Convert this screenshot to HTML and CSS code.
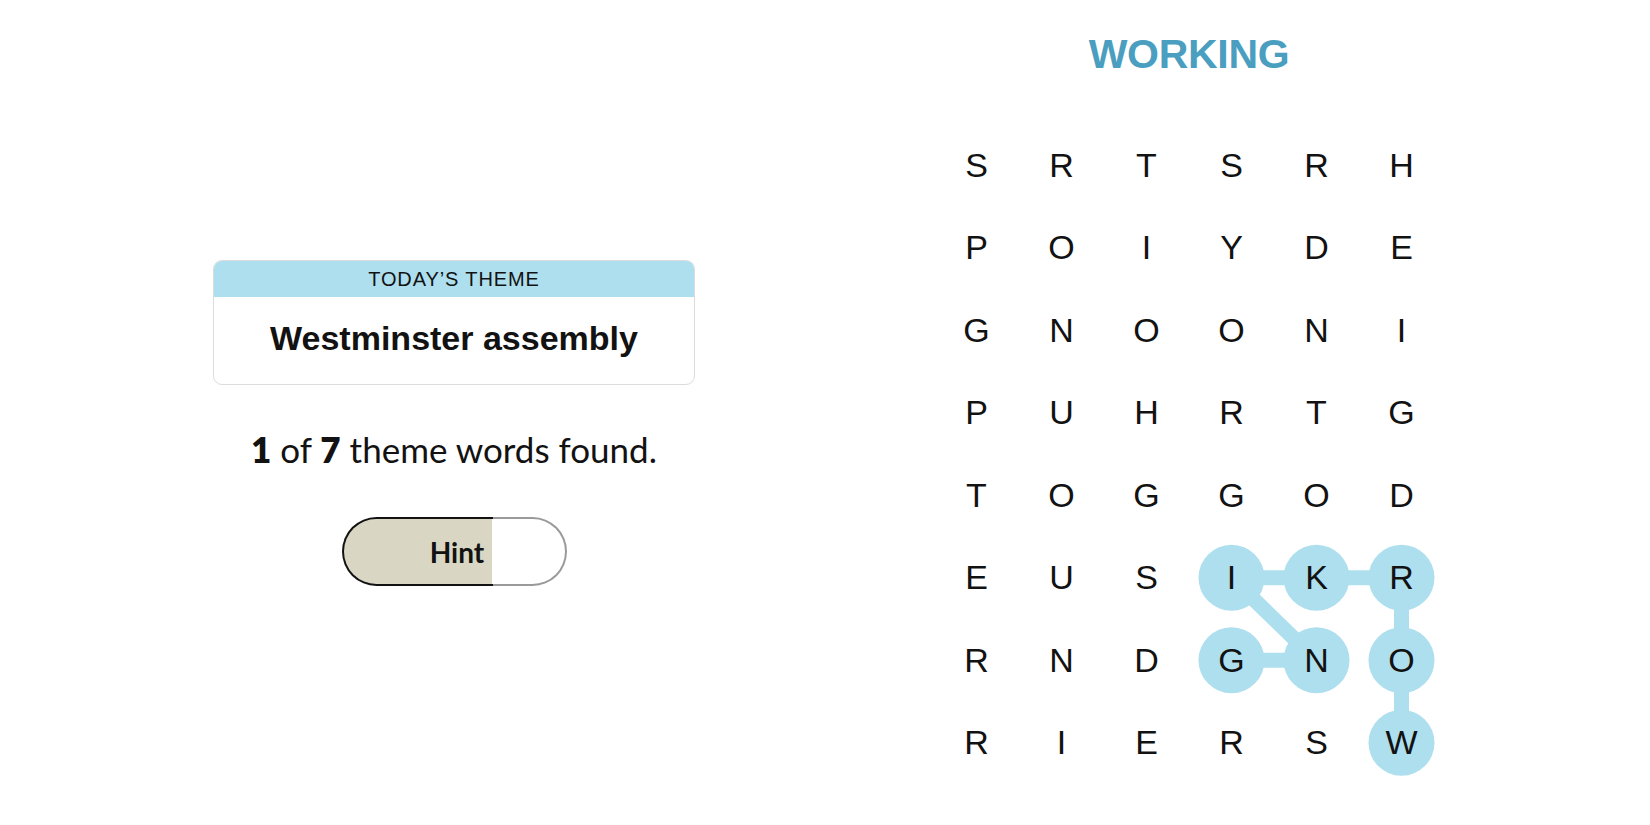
FILE: index.html
```html
<!DOCTYPE html>
<html lang="en">
<head>
<meta charset="utf-8">
<title>Strands</title>
<link rel="stylesheet" href="styles.css">
</head>
<body>
<div class="page">
  <section class="left">
    <div class="theme-card">
      <div class="theme-head">TODAY’S THEME</div>
      <div class="theme-body">Westminster assembly</div>
    </div>
    <p class="found"><b>1</b> of <b>7</b> theme words found.</p>
    <button class="hint">Hint</button>
  </section>
  <section class="right">
    <h1 class="status">WORKING</h1>
    <div class="board">
      <svg class="trail" width="510" height="660" viewBox="0 0 510 660">
        <g stroke="#aedfee" stroke-width="15" stroke-linecap="round" fill="none">
          <polyline points="467.5,618.75 467.5,536.25 467.5,453.75 382.5,453.75 297.5,453.75 382.5,536.25 297.5,536.25"/>
        </g>
        <g fill="#aedfee">
          <circle cx="297.5" cy="453.75" r="33"/>
          <circle cx="382.5" cy="453.75" r="33"/>
          <circle cx="467.5" cy="453.75" r="33"/>
          <circle cx="297.5" cy="536.25" r="33"/>
          <circle cx="382.5" cy="536.25" r="33"/>
          <circle cx="467.5" cy="536.25" r="33"/>
          <circle cx="467.5" cy="618.75" r="33"/>
        </g>
      </svg>
      <div class="grid">
        <span>S</span><span>R</span><span>T</span><span>S</span><span>R</span><span>H</span>
        <span>P</span><span>O</span><span>I</span><span>Y</span><span>D</span><span>E</span>
        <span>G</span><span>N</span><span>O</span><span>O</span><span>N</span><span>I</span>
        <span>P</span><span>U</span><span>H</span><span>R</span><span>T</span><span>G</span>
        <span>T</span><span>O</span><span>G</span><span>G</span><span>O</span><span>D</span>
        <span>E</span><span>U</span><span>S</span><span>I</span><span>K</span><span>R</span>
        <span>R</span><span>N</span><span>D</span><span>G</span><span>N</span><span>O</span>
        <span>R</span><span>I</span><span>E</span><span>R</span><span>S</span><span>W</span>
      </div>
    </div>
  </section>
</div>
</body>
</html>
```
FILE: styles.css
```css
* { box-sizing: border-box; }
html, body { margin: 0; padding: 0; background: #fff; }
body {
  font-family: "Liberation Sans", Arial, sans-serif;
  color: #121212;
}
.page {
  display: flex;
  width: 1650px;
  height: 825px;
  overflow: hidden;
}
.left {
  width: 908px;
  display: flex;
  flex-direction: column;
  align-items: center;
  padding-top: 260px;
}
.theme-card {
  width: 482px;
  border: 1px solid #dcdcdc;
  border-radius: 9px;
  overflow: hidden;
}
.theme-head {
  height: 36px;
  background: #aedfee;
  display: flex;
  align-items: center;
  justify-content: center;
  font-size: 20px;
  letter-spacing: 0.9px;
  padding-top: 1px;
}
.theme-body {
  height: 87px;
  display: flex;
  align-items: center;
  justify-content: center;
  font-weight: bold;
  font-size: 34px;
  padding-bottom: 4px;
}
.found {
  margin: 42px 0 0;
  font-family: Lato, "Liberation Sans", sans-serif;
  font-size: 35px;
  line-height: 44px;
  color: #121212;
}
.found b { font-weight: 800; }
.hint {
  margin-top: 46px;
  width: 225px;
  height: 69px;
  border-radius: 35px;
  border: 2px solid transparent;
  background:
    linear-gradient(90deg, #d9d7c4 67%, #ffffff 67%) padding-box,
    linear-gradient(90deg, #121212 67%, #9a9a9a 67%) border-box;
  font-family: Lato, "Liberation Sans", sans-serif;
  font-weight: bold;
  font-size: 28px;
  color: #121212;
  padding: 0 0 0 6px;
}
.right {
  width: 562px;
  display: flex;
  flex-direction: column;
  align-items: center;
}
.status {
  margin: 28px 0 0;
  font-size: 41px;
  line-height: 52px;
  font-weight: bold;
  color: #4a9ec0;
  letter-spacing: -0.3px;
}
.board {
  position: relative;
  margin-top: 44px;
  width: 510px;
  height: 660px;
}
.trail {
  position: absolute;
  left: 0;
  top: 0;
}
.grid {
  position: relative;
  display: grid;
  grid-template-columns: repeat(6, 85px);
  grid-template-rows: repeat(8, 82.5px);
}
.grid span {
  display: flex;
  align-items: center;
  justify-content: center;
  font-size: 34px;
  color: #121212;
}
```
